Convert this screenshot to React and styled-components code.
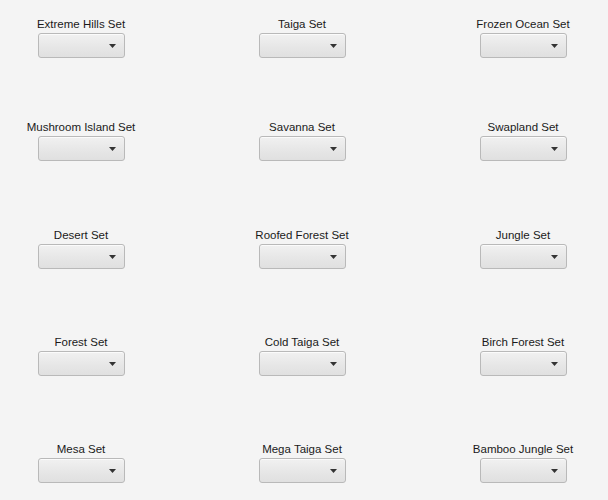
import React from "react";
import styled, { createGlobalStyle } from "styled-components";

const Global = createGlobalStyle`
  html, body { margin: 0; padding: 0; background: #f4f4f4; }
  body { font-family: "Liberation Sans", Arial, sans-serif; }
`;

const Page = styled.div`
  width: 608px;
  height: 500px;
  box-sizing: border-box;
  padding-top: 16px;
  display: grid;
  grid-template-columns: repeat(3, 162px);
  column-gap: 59px;
  grid-template-rows: 103px 108px 107px 107px auto;
  align-items: start;
  overflow: hidden;
`;

const Cell = styled.div`
  display: flex;
  flex-direction: column;
  align-items: center;
`;

const Label = styled.div`
  font-size: 11.5px;
  line-height: 17px;
  color: #1a1a1a;
  white-space: nowrap;
`;

const Combo = styled.div`
  width: 87px;
  height: 25px;
  box-sizing: border-box;
  border: 1px solid #b9b9b9;
  border-radius: 3px;
  background: linear-gradient(to bottom, #f1f1f1 0%, #e6e6e6 60%, #e0e0e0 100%);
  box-shadow: inset 0 1px 0 #fbfbfb;
  display: flex;
  align-items: center;
  justify-content: flex-end;
  padding-right: 8px;
`;

const Arrow = styled.svg`
  width: 7px;
  height: 4px;
  display: block;
`;

const sets = [
  "Extreme Hills Set", "Taiga Set", "Frozen Ocean Set",
  "Mushroom Island Set", "Savanna Set", "Swapland Set",
  "Desert Set", "Roofed Forest Set", "Jungle Set",
  "Forest Set", "Cold Taiga Set", "Birch Forest Set",
  "Mesa Set", "Mega Taiga Set", "Bamboo Jungle Set",
];

export default function App() {
  return (
    <>
      <Global />
      <Page>
        {sets.map((s) => (
          <Cell key={s}>
            <Label>{s}</Label>
            <Combo>
              <Arrow viewBox="0 0 7 4">
                <polygon points="0,0 7,0 3.5,4" fill="#333" />
              </Arrow>
            </Combo>
          </Cell>
        ))}
      </Page>
    </>
  );
}
